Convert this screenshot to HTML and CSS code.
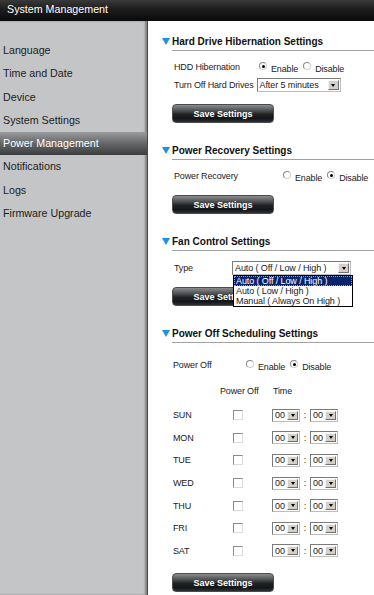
FILE: index.html
```html
<!DOCTYPE html>
<html lang="en">
<head>
  <meta charset="UTF-8" />
  <meta name="viewport" content="width=device-width, initial-scale=1.0"/>
  <title>System Management - Power Management</title>
  <link rel="stylesheet" href="styles.css">
</head>
<body>
  <div class="topbar">System Management</div>

  <div class="layout">
    <nav class="sidebar">
      <a class="nav-item">Language</a>
      <a class="nav-item">Time and Date</a>
      <a class="nav-item">Device</a>
      <a class="nav-item">System Settings</a>
      <a class="nav-item active">Power Management</a>
      <a class="nav-item">Notifications</a>
      <a class="nav-item">Logs</a>
      <a class="nav-item">Firmware Upgrade</a>
    </nav>

    <main class="content">
      <section class="panel first">
        <div class="panel-head"><span class="tri"></span><h2>Hard Drive Hibernation Settings</h2></div>
        <div class="rule"></div>
        <div class="row top">
          <span class="label" style="width:85px">HDD Hibernation</span>
          <span class="radio checked"></span><span class="opt">Enable</span>
          <span class="radio"></span><span class="opt">Disable</span>
        </div>
        <div class="row">
          <span class="label gap">Turn Off Hard Drives</span>
          <div class="select" style="width:84px"><span class="val">After 5 minutes</span><span class="drop"></span></div>
        </div>
        <button class="save">Save Settings</button>
      </section>

      <section class="panel">
        <div class="panel-head"><span class="tri"></span><h2>Power Recovery Settings</h2></div>
        <div class="rule"></div>
        <div class="row top">
          <span class="label" style="width:109px">Power Recovery</span>
          <span class="radio"></span><span class="opt">Enable</span>
          <span class="radio checked"></span><span class="opt">Disable</span>
        </div>
        <button class="save">Save Settings</button>
      </section>

      <section class="panel">
        <div class="panel-head"><span class="tri"></span><h2>Fan Control Settings</h2></div>
        <div class="rule"></div>
        <div class="row top fan">
          <span class="label" style="width:58px">Type</span>
          <div class="select" style="width:119px"><span class="val">Auto ( Off / Low / High )</span><span class="drop"></span></div>
          <ul class="dropdown">
            <li class="hl">Auto ( Off / Low / High )</li>
            <li>Auto ( Low / High )</li>
            <li>Manual ( Always On High )</li>
          </ul>
        </div>
        <button class="save">Save Settings</button>
      </section>

      <section class="panel">
        <div class="panel-head"><span class="tri"></span><h2>Power Off Scheduling Settings</h2></div>
        <div class="rule"></div>
        <div class="row top sched-top">
          <span class="label" style="width:73px">Power Off</span>
          <span class="radio"></span><span class="opt">Enable</span>
          <span class="radio checked"></span><span class="opt">Disable</span>
        </div>
        <div class="row col-head">
          <span class="ch-off">Power Off</span>
          <span>Time</span>
        </div>
        <div class="days">
          <div class="day"><span class="dname">SUN</span><span class="cell"><span class="check"></span></span><div class="select tsel"><span class="val">00</span><span class="drop"></span></div><span class="colon">:</span><div class="select tsel"><span class="val">00</span><span class="drop"></span></div></div>
          <div class="day"><span class="dname">MON</span><span class="cell"><span class="check"></span></span><div class="select tsel"><span class="val">00</span><span class="drop"></span></div><span class="colon">:</span><div class="select tsel"><span class="val">00</span><span class="drop"></span></div></div>
          <div class="day"><span class="dname">TUE</span><span class="cell"><span class="check"></span></span><div class="select tsel"><span class="val">00</span><span class="drop"></span></div><span class="colon">:</span><div class="select tsel"><span class="val">00</span><span class="drop"></span></div></div>
          <div class="day"><span class="dname">WED</span><span class="cell"><span class="check"></span></span><div class="select tsel"><span class="val">00</span><span class="drop"></span></div><span class="colon">:</span><div class="select tsel"><span class="val">00</span><span class="drop"></span></div></div>
          <div class="day"><span class="dname">THU</span><span class="cell"><span class="check"></span></span><div class="select tsel"><span class="val">00</span><span class="drop"></span></div><span class="colon">:</span><div class="select tsel"><span class="val">00</span><span class="drop"></span></div></div>
          <div class="day"><span class="dname">FRI</span><span class="cell"><span class="check"></span></span><div class="select tsel"><span class="val">00</span><span class="drop"></span></div><span class="colon">:</span><div class="select tsel"><span class="val">00</span><span class="drop"></span></div></div>
          <div class="day"><span class="dname">SAT</span><span class="cell"><span class="check"></span></span><div class="select tsel"><span class="val">00</span><span class="drop"></span></div><span class="colon">:</span><div class="select tsel"><span class="val">00</span><span class="drop"></span></div></div>
        </div>
        <button class="save sched-save">Save Settings</button>
      </section>
    </main>
  </div>
</body>
</html>
```

FILE: styles.css
```css
body {
  margin: 0;
  font-family: "Liberation Sans", Arial, sans-serif;
  color: #1a1a1a;
  overflow: hidden;
  background: #fff;
}

.topbar {
  height: 21px;
  line-height: 19px;
  padding-left: 7px;
  font-size: 10.7px;
  color: #fff;
  background: linear-gradient(#3a3a3a, #1c1c1c 45%, #0a0a0a);
}

.layout { display: flex; min-height: calc(100vh - 21px); }

/* left menu */
.sidebar {
  width: 147px;
  padding-top: 18px;
  background: #c4c5c7;
  border-right: 1px solid #4a4a4a;
  box-shadow: inset -2px 0 2px rgba(0,0,0,0.35);
  box-sizing: content-box;
  display: flex;
  flex-direction: column;
}
.nav-item {
  height: 23.3px;
  line-height: 23.3px;
  padding-left: 3px;
  font-size: 10.7px;
  color: #1c1c1c;
}
.nav-item.active {
  color: #fff;
  background: linear-gradient(#9a9b9d, #6a6b6d 45%, #3c3d3f);
}

/* right content */
.content { flex: 1; padding-left: 14px; }

.panel-head {
  display: flex;
  align-items: center;
  height: 14px;
  margin-top: 20px;
}
.panel.first .panel-head { margin-top: 13px; }
.tri {
  width: 0; height: 0;
  border-left: 4.5px solid transparent;
  border-right: 4.5px solid transparent;
  border-top: 7px solid #1c8fe6;
  margin-right: 2px;
}
.panel-head h2 {
  margin: 0;
  font-size: 10px;
  font-weight: bold;
  color: #111;
}
.rule {
  margin: 2px 0 0 10px;
  border-top: 1px solid #a2a2a2;
}

.row {
  display: flex;
  align-items: center;
  height: 18px;
  padding-left: 12px;
  font-size: 9px;
  letter-spacing: -0.15px;
}
.row.top { margin-top: 7px; }
.row.fan { margin-top: 8px; position: relative; }
.row.sched-top { margin-top: 13px; padding-left: 11px; }
.label { flex-shrink: 0; color: #1c1c1c; }
.label.gap { margin-right: 3px; }

.radio {
  width: 6px; height: 6px;
  border: 1px solid #8a8a8a;
  border-right-color: #d0d0d0;
  border-bottom-color: #d0d0d0;
  border-radius: 50%;
  background: #fff;
  position: relative;
  margin-top: -2px;
}
.radio.checked::after {
  content: "";
  position: absolute;
  left: 1.5px; top: 1.5px;
  width: 3px; height: 3px;
  border-radius: 50%;
  background: #000;
}
.opt { margin: 3px 5px 0 4px; }

.select {
  display: flex;
  align-items: center;
  height: 14px;
  box-sizing: border-box;
  border: 1px solid #7a7a7a;
  border-right-color: #bdbdbd;
  border-bottom-color: #bdbdbd;
  background: #fff;
  font-size: 9px;
  letter-spacing: -0.1px;
}
.select .val { flex: 1; padding-left: 2px; white-space: nowrap; overflow: hidden; }
.drop {
  width: 11px; height: 10px;
  margin-right: 1px;
  box-sizing: border-box;
  background: #d4d0c8;
  border: 1px solid #f4f4f4;
  border-right-color: #707070;
  border-bottom-color: #707070;
  display: flex;
  align-items: center;
  justify-content: center;
}
.drop::after {
  content: "";
  border-left: 2.5px solid transparent;
  border-right: 2.5px solid transparent;
  border-top: 3px solid #000;
}

.dropdown {
  position: absolute;
  left: 71px; top: 16px;
  width: 118px;
  margin: 0; padding: 0;
  list-style: none;
  background: #fff;
  border: 1px solid #000;
  font-size: 9px;
  letter-spacing: -0.1px;
  z-index: 2;
}
.dropdown li { height: 10px; line-height: 10px; padding-left: 2px; }
.dropdown li.hl { background: #0a246a; color: #fff; outline: 1px dotted #8aa0d0; outline-offset: -1px; }

.save {
  display: block;
  width: 102px; height: 19px;
  margin: 10px 0 0 10px;
  padding: 0;
  border: 1px solid #4a4c4e;
  border-radius: 4px;
  background: linear-gradient(#8a8c8e, #4a4c4e 35%, #202224 55%, #14171a 80%, #2c3033);
  color: #fff;
  font-family: "Liberation Sans", Arial, sans-serif;
  font-size: 9px;
  font-weight: bold;
}

.col-head { margin-top: 8px; padding-left: 11px; }
.ch-off { margin-left: 47px; width: 53px; }

.days { margin-top: 4px; padding-left: 11px; font-size: 9px; letter-spacing: -0.15px; }
.day { display: flex; align-items: center; height: 22.6px; }
.dname { width: 60px; }
.cell { width: 39px; display: flex; }
.check {
  width: 8px; height: 8px;
  border: 1px solid #8a8a8a;
  border-right-color: #dcdcdc;
  border-bottom-color: #dcdcdc;
  background: #fff;
}
.tsel { width: 28px; height: 13px; }
.tsel .drop { height: 9px; }
.colon { width: 10px; text-align: center; }
.sched-save { margin-top: 11px; }
```
